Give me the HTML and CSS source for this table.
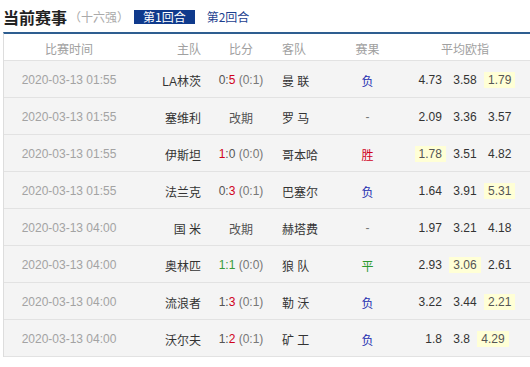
FILE: index.html
```html
<!DOCTYPE html>
<html lang="zh">
<head>
<meta charset="utf-8">
<link rel="stylesheet" href="styles.css">
</head>
<body>
<div class="wrap">
  <div class="title-bar">
    <span class="title">当前赛事</span>
    <span class="stage">（十六强）</span>
    <span class="tab active">第1回合</span>
    <span class="tab">第2回合</span>
  </div>
  <div class="grid">
    <div class="row head">
      <div class="c time">比赛时间</div>
      <div class="c home">主队</div>
      <div class="c score">比分</div>
      <div class="c away">客队</div>
      <div class="c res">赛果</div>
      <div class="c odds">平均欧指</div>
    </div>
    <div class="row">
      <div class="c time num">2020-03-13 01:55</div>
      <div class="c home">LA林茨</div>
      <div class="c score num"><span class="s">0:<em class="w">5</em></span> <span class="ht">(0:1)</span></div>
      <div class="c away">曼 联</div>
      <div class="c res"><span class="lose">负</span></div>
      <div class="c odds num"><span class="o">4.73</span> <span class="o">3.58</span> <span class="o hl">1.79</span></div>
    </div>
    <div class="row">
      <div class="c time num">2020-03-13 01:55</div>
      <div class="c home">塞维利</div>
      <div class="c score"><span class="pp">改期</span></div>
      <div class="c away">罗 马</div>
      <div class="c res"><span class="dash">-</span></div>
      <div class="c odds num"><span class="o">2.09</span> <span class="o">3.36</span> <span class="o">3.57</span></div>
    </div>
    <div class="row">
      <div class="c time num">2020-03-13 01:55</div>
      <div class="c home">伊斯坦</div>
      <div class="c score num"><span class="s"><em class="w">1</em>:0</span> <span class="ht">(0:0)</span></div>
      <div class="c away">哥本哈</div>
      <div class="c res"><span class="win">胜</span></div>
      <div class="c odds num"><span class="o hl">1.78</span> <span class="o">3.51</span> <span class="o">4.82</span></div>
    </div>
    <div class="row">
      <div class="c time num">2020-03-13 01:55</div>
      <div class="c home">法兰克</div>
      <div class="c score num"><span class="s">0:<em class="w">3</em></span> <span class="ht">(0:1)</span></div>
      <div class="c away">巴塞尔</div>
      <div class="c res"><span class="lose">负</span></div>
      <div class="c odds num"><span class="o">1.64</span> <span class="o">3.91</span> <span class="o hl">5.31</span></div>
    </div>
    <div class="row">
      <div class="c time num">2020-03-13 04:00</div>
      <div class="c home">国 米</div>
      <div class="c score"><span class="pp">改期</span></div>
      <div class="c away">赫塔费</div>
      <div class="c res"><span class="dash">-</span></div>
      <div class="c odds num"><span class="o">1.97</span> <span class="o">3.21</span> <span class="o">4.18</span></div>
    </div>
    <div class="row">
      <div class="c time num">2020-03-13 04:00</div>
      <div class="c home">奥林匹</div>
      <div class="c score num"><span class="s draw">1:1</span> <span class="ht">(0:0)</span></div>
      <div class="c away">狼 队</div>
      <div class="c res"><span class="drawr">平</span></div>
      <div class="c odds num"><span class="o">2.93</span> <span class="o hl">3.06</span> <span class="o">2.61</span></div>
    </div>
    <div class="row">
      <div class="c time num">2020-03-13 04:00</div>
      <div class="c home">流浪者</div>
      <div class="c score num"><span class="s">1:<em class="w">3</em></span> <span class="ht">(0:1)</span></div>
      <div class="c away">勒 沃</div>
      <div class="c res"><span class="lose">负</span></div>
      <div class="c odds num"><span class="o">3.22</span> <span class="o">3.44</span> <span class="o hl">2.21</span></div>
    </div>
    <div class="row">
      <div class="c time num">2020-03-13 04:00</div>
      <div class="c home">沃尔夫</div>
      <div class="c score num"><span class="s">1:<em class="w">2</em></span> <span class="ht">(0:1)</span></div>
      <div class="c away">矿 工</div>
      <div class="c res"><span class="lose">负</span></div>
      <div class="c odds num"><span class="o">1.8</span> <span class="o">3.8</span> <span class="o hl">4.29</span></div>
    </div>
  </div>
</div>
</body>
</html>
```

FILE: styles.css
```css
html, body {
  margin: 0;
  padding: 0;
  background: #ffffff;
}
body {
  font-family: "Liberation Sans", "Noto Sans CJK SC", sans-serif;
  font-size: 12px;
  color: #333333;
}
.wrap {
  padding-left: 3px;
  width: 527px;
}
.title-bar {
  height: 32px;
  display: flex;
  align-items: center;
  padding-top: 1px;
  box-sizing: border-box;
}
.title {
  font-family: "Noto Sans CJK SC", sans-serif;
  font-size: 16px;
  font-weight: bold;
  color: #222222;
  line-height: 20px;
}
.stage {
  font-family: "Noto Sans CJK SC", sans-serif;
  font-size: 12px;
  color: #aaaaaa;
  margin-left: 2px;
}
.tab {
  font-family: "Noto Sans CJK SC", sans-serif;
  font-size: 12px;
  line-height: 14px;
  color: #1c3f8f;
  padding: 0 9px;
  margin-left: 3px;
}
.tab.active {
  background: #0f3a8c;
  color: #ffffff;
  margin-left: 5px;
}
.grid {
  border-top: 2px solid #2e5e90;
  border-left: 1px solid #dddddd;
}
.row {
  display: grid;
  grid-template-columns: 130px 76px 62px 63px 65px 130px;
  height: 36px;
  padding-top: 2px;
  box-sizing: border-box;
  height: 37px;
  border-bottom: 1px solid #e2e2e2;
  background: #f4f4f4;
  align-items: center;
}
.row.head {
  height: 27px;
  background: #ffffff;
  color: #a0a0a0;
}
.c {
  white-space: nowrap;
}
.time {
  text-align: center;
}
.row:not(.head) .time {
  color: #a3a3a3;
}
.num {
  font-size: 12px;
}
.home {
  text-align: right;
  padding-right: 9px;
}
.score {
  text-align: center;
}
.away {
  padding-left: 10px;
}
.res {
  text-align: center;
}
.odds {
  text-align: center;
}
.s {
  color: #555555;
}
.w {
  font-style: normal;
  color: #d0021b;
}
.draw {
  color: #3a9a3a;
}
.ht {
  color: #777777;
}
.pp {
  color: #555555;
}
.lose {
  color: #1f2fb0;
}
.win {
  color: #d0021b;
}
.drawr {
  color: #2f9a2f;
}
.dash {
  color: #777777;
}
.o {
  display: inline-block;
  padding: 0 4px;
  line-height: 16px;
  color: #333333;
}
.o.hl {
  background: #ffffd6;
  color: #555555;
}
```
